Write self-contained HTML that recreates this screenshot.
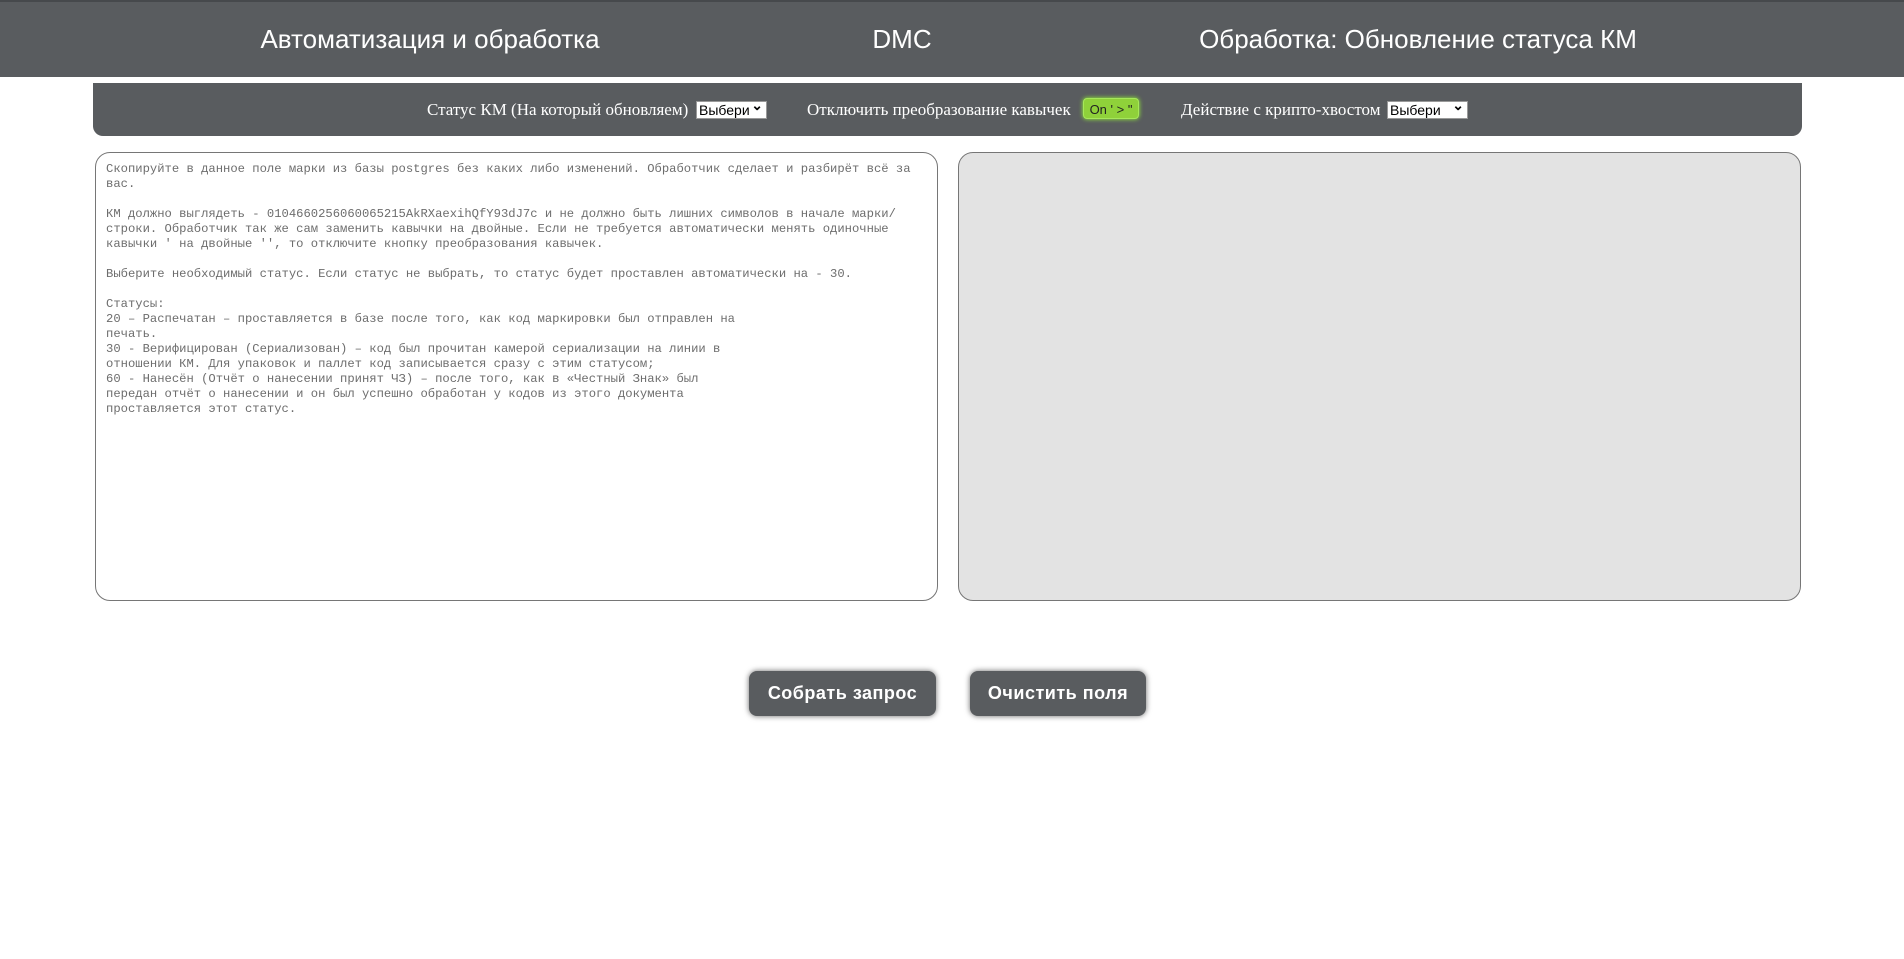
<!DOCTYPE html>
<html><head><meta charset="utf-8"><style>
body{margin:0;width:1904px;height:959px;background:#fff;position:relative;overflow:hidden;font-family:"Liberation Sans",sans-serif}
.hdr{position:absolute;left:0;top:0;width:1904px;height:77px;background:#595c5f;border-top:2px solid #46494c;box-sizing:border-box}
.t{position:absolute;top:22px;color:#fff;font-size:26px;white-space:nowrap;transform:translateX(-50%);font-family:"Liberation Sans Narrow","Liberation Sans",sans-serif}
.bar{position:absolute;left:93px;top:83px;width:1709px;height:53px;background:#595c5f;border-radius:0 0 10px 10px}
.lb{position:absolute;top:17px;color:#fff;font-family:"Liberation Serif",serif;font-size:17px;white-space:nowrap}
.sel{position:absolute;top:18px;height:18px;background:#fff;border:1px solid #999;box-sizing:border-box;font-size:14px;color:#000;line-height:16px;padding-left:2px}
.sel:after{content:"⌄";position:absolute;right:3px;top:-5px;font-weight:bold;font-size:14px}
.on{position:absolute;left:990px;top:15px;width:56px;height:21px;background:#8fd13a;border:1px solid #a6e85a;border-radius:4px;box-shadow:0 0 5px #9f3;font-size:13px;color:#222;line-height:21px;text-align:center;box-sizing:border-box}
.ta{position:absolute;top:152px;height:449px;width:843px;border:1px solid #767676;border-radius:15px;box-sizing:border-box}
pre{margin:0;position:absolute;left:10px;top:9px;font-family:"Liberation Mono",monospace;font-size:12.2px;line-height:15px;color:#6d6d6d}
.btn{position:absolute;top:671px;height:45px;background:#595c5f;color:#fff;font-weight:bold;font-size:18px;border-radius:8px;box-shadow:0 0 6px rgba(0,0,0,.6);text-align:center;line-height:45px;letter-spacing:.5px}
</style></head><body>
<div class="hdr">
<div class="t" style="left:430px">Автоматизация и обработка</div>
<div class="t" style="left:902px">DMC</div>
<div class="t" style="left:1418px">Обработка: Обновление статуса КМ</div>
</div>
<div class="bar">
<div class="lb" style="left:334px">Статус КМ (На который обновляем)</div>
<div class="sel" style="left:603px;width:71px">Выбери</div>
<div class="lb" style="left:714px">Отключить преобразование кавычек</div>
<div class="on">On ' &gt; "</div>
<div class="lb" style="left:1088px">Действие с крипто-хвостом</div>
<div class="sel" style="left:1294px;width:81px">Выбери</div>
</div>
<div class="ta" style="left:95px"><pre>Скопируйте в данное поле марки из базы postgres без каких либо изменений. Обработчик сделает и разбирёт всё за
вас.

КМ должно выглядеть - 0104660256060065215AkRXaexihQfY93dJ7c и не должно быть лишних символов в начале марки/
строки. Обработчик так же сам заменить кавычки на двойные. Если не требуется автоматически менять одиночные
кавычки ' на двойные '', то отключите кнопку преобразования кавычек.

Выберите необходимый статус. Если статус не выбрать, то статус будет проставлен автоматически на - 30.

Статусы:
20 – Распечатан – проставляется в базе после того, как код маркировки был отправлен на
печать.
30 - Верифицирован (Сериализован) – код был прочитан камерой сериализации на линии в
отношении КМ. Для упаковок и паллет код записывается сразу с этим статусом;
60 - Нанесён (Отчёт о нанесении принят ЧЗ) – после того, как в «Честный Знак» был
передан отчёт о нанесении и он был успешно обработан у кодов из этого документа
проставляется этот статус.</pre></div>
<div class="ta" style="left:958px;background:#e3e3e3"></div>
<div class="btn" style="left:749px;width:187px">Собрать запрос</div>
<div class="btn" style="left:970px;width:176px">Очистить поля</div>
</body></html>
